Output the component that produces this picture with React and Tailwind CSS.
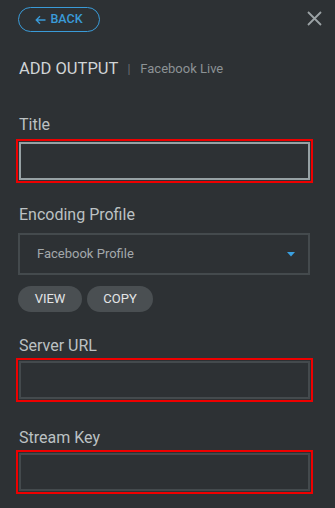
const Field = ({ label, className = '', focused = false, gap = 'mt-[7px]' }) => (
  <div className={className}>
    <label className="block text-[16px] leading-[20px] text-[#bcc1c3]">{label}</label>
    <div className={`${gap} outline-2 outline-[#ee0000] outline-offset-[1px]`}>
      <input
        className={`block w-full h-[38px] border-2 bg-transparent outline-none ${
          focused ? 'border-[#97a1a4]' : 'border-[#444a4d]'
        }`}
      />
    </div>
  </div>
);

export default function App() {
  return (
    <div
      className="w-[335px] h-[508px] bg-[#2d3134] pl-[18px] pr-[25px] overflow-hidden"
      style={{ fontFamily: 'Roboto, "Liberation Sans", sans-serif' }}
    >
      {/* Top bar */}
      <div className="flex items-start justify-between pt-[7px]">
        <button className="flex items-center justify-center gap-[4px] w-[82px] h-[25px] rounded-full border-[1.5px] border-[#3a9bd8] text-[#3a9bd8] text-[12.5px] font-medium">
          <svg width="11" height="10" viewBox="0 0 11 10" fill="none" stroke="currentColor" strokeWidth="1.3">
            <path d="M10.5 5H1.5M5 1.2L1.2 5L5 8.8" />
          </svg>
          BACK
        </button>
        <svg className="mt-[4px] mr-[-12px]" width="15" height="15" viewBox="0 0 15 15" stroke="#9ba2a5" strokeWidth="1.8">
          <path d="M1 1L14 14M14 1L1 14" />
        </svg>
      </div>

      {/* Heading */}
      <div className="flex items-center mt-[25px] pl-[1px] h-[24px]">
        <span className="text-[16.5px] text-[#d0d4d6]">ADD OUTPUT</span>
        <span className="ml-[9px] mr-[10px] text-[12px] text-[#6c7275]">|</span>
        <span className="text-[13px] text-[#8c9295]">Facebook Live</span>
      </div>

      <Field label="Title" focused className="mt-[34px] pl-[1px]" />

      {/* Encoding profile */}
      <div className="mt-[25px]">
        <label className="block pl-[1px] text-[16px] leading-[20px] text-[#bcc1c3]">Encoding Profile</label>
        <div className="mt-[8px] flex items-center justify-between h-[42px] border-2 border-[#444a4d] pl-[17px] pr-[13px]">
          <span className="text-[13px] text-[#a3a8ab]">Facebook Profile</span>
          <svg width="8" height="5" viewBox="0 0 8 5" fill="#3aa0e0">
            <path d="M0 0H8L4 4.5Z" />
          </svg>
        </div>
        <div className="flex gap-[5px] mt-[11px]">
          <button className="w-[64px] h-[26px] rounded-full bg-[#4a4f52] text-[13px] text-[#e3e5e6]">VIEW</button>
          <button className="w-[66px] h-[26px] rounded-full bg-[#4a4f52] text-[13px] text-[#e3e5e6]">COPY</button>
        </div>
      </div>

      <Field label="Server URL" gap="mt-[5px]" className="mt-[24px] pl-[1px]" />
      <Field label="Stream Key" gap="mt-[5px]" className="mt-[29px] pl-[1px]" />
    </div>
  );
}
